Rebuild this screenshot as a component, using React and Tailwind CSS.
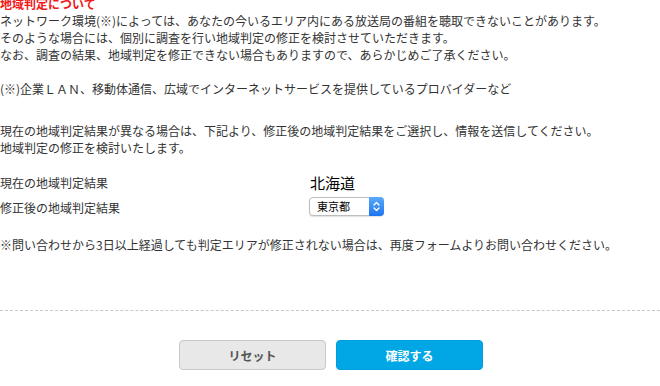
export default function App() {
  return (
    <div
      className="flex h-[386px] w-[660px] flex-col overflow-hidden bg-white text-[12px] leading-[17px] text-[#333]"
      style={{ fontFamily: '"Noto Sans CJK JP", "Liberation Sans", sans-serif' }}
    >
      <div className="-mt-[5px]">
        <div className="font-bold text-[#f01818]">地域判定について</div>
        <p>
          ネットワーク環境(※)によっては、あなたの今いるエリア内にある放送局の番組を聴取できないことがあります。
          <br />
          そのような場合には、個別に調査を行い地域判定の修正を検討させていただきます。
          <br />
          なお、調査の結果、地域判定を修正できない場合もありますので、あらかじめご了承ください。
        </p>
        <p className="mt-[17px]">(※)企業ＬＡＮ、移動体通信、広域でインターネットサービスを提供しているプロバイダーなど</p>
      </div>

      <p className="mt-[25px]">
        現在の地域判定結果が異なる場合は、下記より、修正後の地域判定結果をご選択し、情報を送信してください。
        <br />
        地域判定の修正を検討いたします。
      </p>

      <div className="mt-[14px]">
        <div className="flex h-[25px] items-center">
          <div className="w-[309px]">現在の地域判定結果</div>
          <div className="pl-[1px] text-[15px] text-black">北海道</div>
        </div>
        <div className="flex h-[25px] items-center">
          <div className="w-[309px]">修正後の地域判定結果</div>
          <div className="relative -mt-[3px] h-[19px] w-[75px]">
            <select
              defaultValue="東京都"
              className="h-full w-full appearance-none rounded-[4px] border border-[#bdbdbd] bg-white pl-[7px] text-[11px] leading-[17px] text-black shadow-[0_1px_1px_rgba(0,0,0,0.12)] outline-none"
            >
              <option>北海道</option>
              <option>東京都</option>
              <option>大阪府</option>
            </select>
            <span className="pointer-events-none absolute right-0 top-0 flex h-[19px] w-[15px] items-center justify-center rounded-r-[4px] bg-gradient-to-b from-[#5aa9fa] to-[#1a74f0]">
              <svg width="7" height="11" viewBox="0 0 7 11" fill="none" stroke="white" strokeWidth="1.4" strokeLinecap="round" strokeLinejoin="round">
                <path d="M1 4 L3.5 1.5 L6 4" />
                <path d="M1 7 L3.5 9.5 L6 7" />
              </svg>
            </span>
          </div>
        </div>
      </div>

      <p className="mt-[16px]">※問い合わせから3日以上経過しても判定エリアが修正されない場合は、再度フォームよりお問い合わせください。</p>

      <div className="mt-[57px] border-t border-dashed border-[#c8c8c8]" />

      <div className="mt-[29px] flex justify-center gap-[10px] pl-[2px]">
        <button className="h-[30px] w-[147px] rounded-[4px] border border-[#c9c9c9] bg-[#e8e8e8] text-[12px] font-bold text-[#555]">
          リセット
        </button>
        <button className="h-[30px] w-[147px] rounded-[4px] border border-[#009fdc] bg-[#00a7e4] text-[12px] font-bold text-white">
          確認する
        </button>
      </div>
    </div>
  );
}
